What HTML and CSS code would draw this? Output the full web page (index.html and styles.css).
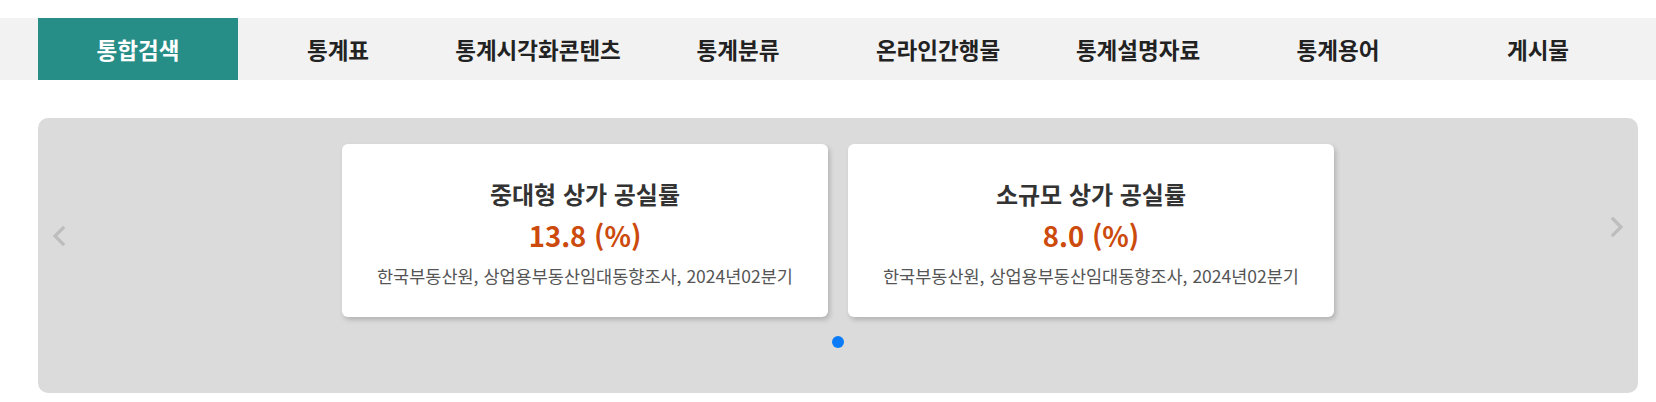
FILE: index.html
```html
<!DOCTYPE html>
<html lang="ko">
<head>
<meta charset="utf-8">
<title>통합검색</title>
<link rel="stylesheet" href="styles.css">
</head>
<body>
<nav class="nav">
  <a class="nav-item active">통합검색</a>
  <a class="nav-item">통계표</a>
  <a class="nav-item">통계시각화콘텐츠</a>
  <a class="nav-item">통계분류</a>
  <a class="nav-item">온라인간행물</a>
  <a class="nav-item">통계설명자료</a>
  <a class="nav-item">통계용어</a>
  <a class="nav-item">게시물</a>
</nav>
<section class="slider">
  <button class="arrow arrow-left" aria-label="이전">
    <svg width="16" height="22" viewBox="0 0 16 22"><polyline points="12,3 4,11 12,19" fill="none" stroke="#bdbdbd" stroke-width="3.2" stroke-linecap="square"/></svg>
  </button>
  <div class="cards">
    <div class="card">
      <div class="card-title">중대형 상가 공실률</div>
      <div class="card-value">13.8 (%)</div>
      <div class="card-source">한국부동산원, 상업용부동산임대동향조사, 2024년02분기</div>
    </div>
    <div class="card">
      <div class="card-title">소규모 상가 공실률</div>
      <div class="card-value">8.0 (%)</div>
      <div class="card-source">한국부동산원, 상업용부동산임대동향조사, 2024년02분기</div>
    </div>
  </div>
  <div class="dots"><span class="dot"></span></div>
  <button class="arrow arrow-right" aria-label="다음">
    <svg width="16" height="22" viewBox="0 0 16 22"><polyline points="4,3 12,11 4,19" fill="none" stroke="#bdbdbd" stroke-width="3.2" stroke-linecap="square"/></svg>
  </button>
</section>
</body>
</html>
```

FILE: styles.css
```css
html, body {
  margin: 0;
  padding: 0;
  background: #ffffff;
  font-family: "Noto Sans CJK KR", "Noto Sans", sans-serif;
}

.nav {
  margin-top: 18px;
  height: 62px;
  background: #f2f2f2;
  display: flex;
  padding-left: 38px;
}

.nav-item {
  width: 200px;
  display: flex;
  align-items: center;
  justify-content: center;
  font-size: 22.5px;
  font-weight: 700;
  color: #222222;
  cursor: pointer;
}

.nav-item.active {
  background: #268d87;
  color: #ffffff;
}

.slider {
  position: relative;
  margin: 38px 18px 0 38px;
  height: 275px;
  background: #dbdbdb;
  border-radius: 10px;
  box-sizing: border-box;
  padding-top: 26px;
}

.cards {
  display: flex;
  justify-content: center;
  gap: 20px;
}

.card {
  width: 486px;
  height: 173px;
  background: #ffffff;
  border-radius: 6px;
  box-shadow: 2px 3px 5px rgba(0, 0, 0, 0.18);
  box-sizing: border-box;
  padding-top: 35px;
  display: flex;
  flex-direction: column;
  align-items: center;
  text-align: center;
}

.card-title {
  font-size: 24px;
  line-height: 30px;
  font-weight: 700;
  color: #333333;
}

.card-value {
  margin-top: 6px;
  font-size: 27.5px;
  line-height: 40px;
  font-weight: 700;
  color: #cc4a0c;
}

.card-source {
  margin-top: 9px;
  font-size: 17.5px;
  line-height: 24px;
  color: #555555;
}

.dots {
  display: flex;
  justify-content: center;
  margin-top: 19px;
}

.dot {
  width: 12px;
  height: 12px;
  border-radius: 50%;
  background: #0b7cf6;
}

.arrow {
  position: absolute;
  border: 0;
  padding: 0;
  background: none;
  width: 16px;
  height: 22px;
  cursor: pointer;
}

.arrow svg {
  display: block;
}

.arrow-left {
  left: 13px;
  top: 107px;
}

.arrow-right {
  right: 13px;
  top: 98px;
}
```
